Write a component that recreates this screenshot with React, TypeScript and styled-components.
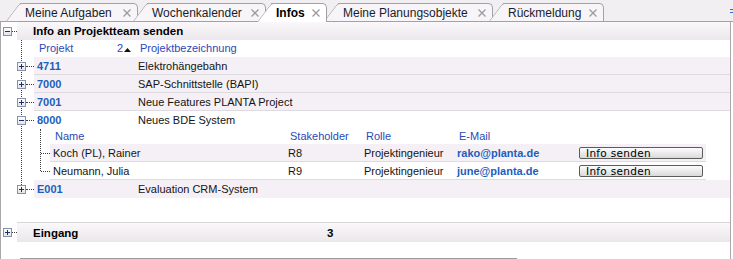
import styled, { createGlobalStyle } from 'styled-components';

const GlobalStyle = createGlobalStyle`
  html, body { margin: 0; padding: 0; background: #fff; }
  body {
    font-family: "Liberation Sans", Arial, sans-serif;
    font-size: 11px;
    color: #141414;
  }
  * { box-sizing: border-box; }
`;

const LINE = '#a3a1a8';

const TabBar = styled.div`
  display: flex;
  align-items: flex-end;
  height: 22px;
  padding-left: 20px;
  background: #f2eff2;
  border-bottom: 1px solid ${LINE};
`;

const Tab = styled.div<{ $active?: boolean; $w: number; $ml: number }>`
  position: relative;
  z-index: ${(p) => (p.$active ? 3 : 1)};
  display: flex;
  align-items: center;
  justify-content: space-between;
  flex: none;
  width: ${(p) => p.$w}px;
  height: ${(p) => (p.$active ? 19 : 18)}px;
  margin-left: ${(p) => p.$ml}px;
  margin-bottom: ${(p) => (p.$active ? -1 : 0)}px;
  padding: 0 6px 0 5px;
  background: ${(p) => (p.$active ? '#fff' : '#f7f5f7')};
  border-top: 1px solid ${LINE};
  border-right: 1px solid ${LINE};
  border-top-right-radius: 5px;
  font-size: 12px;
  font-weight: ${(p) => (p.$active ? 'bold' : 'normal')};
  color: ${(p) => (p.$active ? '#000' : '#1b1b2e')};

  &::before {
    content: '';
    position: absolute;
    z-index: -1;
    top: -1px;
    bottom: 0;
    left: -14px;
    width: 18px;
    background: inherit;
    border-left: 1px solid ${LINE};
    border-top: 1px solid ${LINE};
    border-top-left-radius: 3px;
    transform: skewX(-37deg);
    transform-origin: bottom left;
  }
`;

const EdgeMark = styled.span`
  align-self: center;
  margin-left: auto;
  width: 3px;
  height: 4px;
  border-top: 1px solid #2a6fd0;
  border-bottom: 1px solid #2a6fd0;
`;

const Panel = styled.div`
  display: flex;
  flex-direction: column;
  width: 731px;
  height: 237px;
  border-left: 1px solid #a9a7ab;
  border-right: 1px solid #a9a7ab;
`;

const GroupRow = styled.div<{ $topLine?: boolean; $mt?: number }>`
  display: flex;
  height: ${(p) => (p.$topLine ? 20 : 18)}px;
  margin-top: ${(p) => p.$mt ?? 0}px;
`;

const Band = styled.div<{ $topLine?: boolean }>`
  flex: 1;
  display: flex;
  align-items: center;
  padding-left: 16px;
  background: linear-gradient(#faf8fa, #ebe7ec);
  border-top: ${(p) => (p.$topLine ? '1px solid #d9d5da' : 'none')};
  font-size: 11.5px;
  font-weight: bold;
  color: #000;
`;

const Branch = styled.div<{ $w: number; $indent: number }>`
  flex: none;
  display: flex;
  align-items: center;
  width: ${(p) => p.$w}px;
  padding-left: ${(p) => p.$indent}px;
`;

const Stub = styled.span`
  flex: 1;
  height: 0;
  border-top: 1px dotted #3c3c3c;
`;

const TreeGroup = styled.div<{ $x: number; $bottom: number }>`
  position: relative;

  &::before {
    content: '';
    position: absolute;
    left: ${(p) => p.$x}px;
    top: 0;
    bottom: ${(p) => p.$bottom}px;
    border-left: 1px dotted #3c3c3c;
  }
`;

const Row = styled.div<{ $h?: number }>`
  display: flex;
  height: ${(p) => p.$h ?? 18}px;
`;

const RowBody = styled.div<{ $shade?: boolean; $line?: boolean; $pl?: number; $mr?: number }>`
  flex: 1;
  display: flex;
  align-items: center;
  margin-right: ${(p) => p.$mr ?? 0}px;
  padding-left: ${(p) => p.$pl ?? 3}px;
  background: ${(p) => (p.$shade ? '#f5f0f5' : '#fff')};
  border-bottom: 1px solid ${(p) => (p.$line ? '#dfdadf' : 'transparent')};
`;

const Cell = styled.span<{ $w?: number; $strong?: boolean; $head?: boolean }>`
  flex: none;
  display: flex;
  align-items: center;
  width: ${(p) => (p.$w ? `${p.$w}px` : 'auto')};
  white-space: nowrap;
  font-weight: ${(p) => (p.$strong ? 'bold' : 'normal')};
  color: ${(p) => (p.$strong ? '#1d5ebd' : p.$head ? '#2c48b6' : '#141414')};
`;

const BandCell = styled.span<{ $w?: number }>`
  width: ${(p) => (p.$w ? `${p.$w}px` : 'auto')};
`;

const SortMark = styled.svg`
  margin: 3px 0 0 1px;
`;

const SendButton = styled.button`
  width: 124px;
  height: 12px;
  padding: 0 0 0 6px;
  text-align: left;
  border: 1px solid #5c5c5c;
  border-radius: 2px;
  background: linear-gradient(#fdfdfd, #d9d9d9);
  font-family: "DejaVu Sans", sans-serif;
  font-size: 10.5px;
  letter-spacing: 0.3px;
  line-height: 10px;
  color: #000;
`;

const ScrollLine = styled.div`
  margin-top: auto;
  margin-left: 19px;
  width: 497px;
  height: 1px;
  background: #9b9b9b;
`;

const ToggleSvg = styled.svg`
  position: relative;
  z-index: 1;
  flex: none;
  display: block;
`;

function Toggle({ open }: { open?: boolean }) {
  return (
    <ToggleSvg width="9" height="9" viewBox="0 0 9 9">
      <defs>
        <linearGradient id="tg" x1="0" y1="0" x2="0" y2="1">
          <stop offset="0" stopColor="#ffffff" />
          <stop offset="1" stopColor="#dfe2ea" />
        </linearGradient>
      </defs>
      <rect x="0.5" y="0.5" width="8" height="8" fill="url(#tg)" stroke="#8493a8" />
      <line x1="2" y1="4.5" x2="7" y2="4.5" stroke="#1f2f6a" />
      {!open && <line x1="4.5" y1="2" x2="4.5" y2="7" stroke="#1f2f6a" />}
    </ToggleSvg>
  );
}

function Close() {
  return (
    <svg width="8" height="8" viewBox="0 0 8 8">
      <path d="M0.5 0.5 L7.5 7.5 M7.5 0.5 L0.5 7.5" stroke="#9b9b9f" strokeWidth="1.3" />
    </svg>
  );
}

const tabs = [
  { label: 'Meine Aufgaben', w: 118, ml: 0 },
  { label: 'Wochenkalender', w: 119, ml: 9 },
  { label: 'Infos', w: 56, ml: 5, active: true },
  { label: 'Meine Planungsobjekte', w: 155, ml: 11 },
  { label: 'Rückmeldung', w: 101, ml: 10 },
];

const projects = [
  { id: '4711', name: 'Elektrohängebahn' },
  { id: '7000', name: 'SAP-Schnittstelle (BAPI)' },
  { id: '7001', name: 'Neue Features PLANTA Project' },
];

const people = [
  { name: 'Koch (PL), Rainer', sh: 'R8', role: 'Projektingenieur', mail: 'rako@planta.de' },
  { name: 'Neumann, Julia', sh: 'R9', role: 'Projektingenieur', mail: 'june@planta.de' },
];

const SUB_COLS = [235, 76, 93];

export default function App() {
  return (
    <>
      <GlobalStyle />
      <TabBar>
        {tabs.map((t) => (
          <Tab key={t.label} $w={t.w} $ml={t.ml} $active={t.active}>
            <span>{t.label}</span>
            <Close />
          </Tab>
        ))}
        <EdgeMark />
      </TabBar>

      <Panel>
        <GroupRow>
          <Branch $w={16} $indent={2}>
            <Toggle open />
            <Stub />
          </Branch>
          <Band>Info an Projektteam senden</Band>
        </GroupRow>

        <TreeGroup $x={20} $bottom={9}>
          <Row $h={17}>
            <Branch $w={33} $indent={0} />
            <RowBody $pl={5}>
              <Cell $w={78} $head>Projekt</Cell>
              <Cell $w={23} $head>
                2
                <SortMark width="7" height="4" viewBox="0 0 7 4">
                  <polygon points="0,4 3.5,0 7,4" fill="#111" />
                </SortMark>
              </Cell>
              <Cell $head>Projektbezeichnung</Cell>
            </RowBody>
          </Row>

          {projects.map((p) => (
            <Row key={p.id}>
              <Branch $w={33} $indent={16}>
                <Toggle />
                <Stub />
              </Branch>
              <RowBody $shade $line>
                <Cell $w={101} $strong>{p.id}</Cell>
                <Cell>{p.name}</Cell>
              </RowBody>
            </Row>
          ))}

          <Row>
            <Branch $w={33} $indent={16}>
              <Toggle open />
              <Stub />
            </Branch>
            <RowBody>
              <Cell $w={101} $strong>8000</Cell>
              <Cell>Neues BDE System</Cell>
            </RowBody>
          </Row>

          <TreeGroup $x={39} $bottom={9}>
            <Row $h={15}>
              <Branch $w={49} $indent={0} />
              <RowBody $pl={5} $mr={24}>
                <Cell $w={SUB_COLS[0]} $head>Name</Cell>
                <Cell $w={SUB_COLS[1]} $head>Stakeholder</Cell>
                <Cell $w={SUB_COLS[2]} $head>Rolle</Cell>
                <Cell $head>E-Mail</Cell>
              </RowBody>
            </Row>
            {people.map((m, i) => (
              <Row key={m.name}>
                <Branch $w={49} $indent={40}>
                  <Stub />
                </Branch>
                <RowBody $shade={i === 0} $line $mr={24}>
                  <Cell $w={SUB_COLS[0]}>{m.name}</Cell>
                  <Cell $w={SUB_COLS[1]}>{m.sh}</Cell>
                  <Cell $w={SUB_COLS[2]}>{m.role}</Cell>
                  <Cell $w={122} $strong>{m.mail}</Cell>
                  <SendButton>Info senden</SendButton>
                </RowBody>
              </Row>
            ))}
          </TreeGroup>

          <Row>
            <Branch $w={33} $indent={16}>
              <Toggle />
              <Stub />
            </Branch>
            <RowBody $shade>
              <Cell $w={101} $strong>E001</Cell>
              <Cell>Evaluation CRM-System</Cell>
            </RowBody>
          </Row>
        </TreeGroup>

        <GroupRow $topLine $mt={24}>
          <Branch $w={16} $indent={2}>
            <Toggle />
            <Stub />
          </Branch>
          <Band $topLine>
            <BandCell $w={294}>Eingang</BandCell>
            <BandCell>3</BandCell>
          </Band>
        </GroupRow>

        <ScrollLine />
      </Panel>
    </>
  );
}
